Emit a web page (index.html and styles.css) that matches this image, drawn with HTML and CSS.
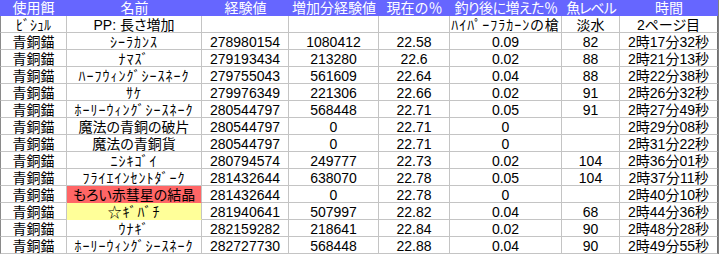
FILE: index.html
```html
<!DOCTYPE html>
<html lang="ja">
<head>
<meta charset="utf-8">
<title>釣りログ</title>
<link rel="stylesheet" href="styles.css">
</head>
<body>
<table class="sheet">
  <colgroup>
    <col class="c-bait">
    <col class="c-name">
    <col class="c-exp">
    <col class="c-gain">
    <col class="c-pct">
    <col class="c-after">
    <col class="c-lvl">
    <col class="c-time">
  </colgroup>
  <thead>
    <tr class="head">
      <th>使用餌</th><th>名前</th><th>経験値</th><th>増加分経験値</th><th class="wide">現在の％</th><th class="tight">釣り後に増えた％</th><th class="tight2">魚レベル</th><th>時間</th>
    </tr>
  </thead>
  <tbody>
    <tr><td>ﾋﾞｼｭﾙ</td><td>PP: 長さ増加</td><td></td><td></td><td></td><td class="hk">ﾊｲﾊﾟｰﾌﾗｶｰﾝの槍</td><td>淡水</td><td>2ページ目</td></tr>
    <tr><td>青銅錨</td><td class="hk">ｼｰﾗｶﾝｽ</td><td>278980154</td><td>1080412</td><td>22.58</td><td>0.09</td><td>82</td><td>2時17分32秒</td></tr>
    <tr><td>青銅錨</td><td class="hk">ﾅﾏｽﾞ</td><td>279193434</td><td>213280</td><td>22.6</td><td>0.02</td><td>88</td><td>2時21分13秒</td></tr>
    <tr><td>青銅錨</td><td class="hk">ﾊｰﾌｳｨﾝｸﾞｼｰｽﾈｰｸ</td><td>279755043</td><td>561609</td><td>22.64</td><td>0.04</td><td>88</td><td>2時22分38秒</td></tr>
    <tr><td>青銅錨</td><td class="hk">ｻｹ</td><td>279976349</td><td>221306</td><td>22.66</td><td>0.02</td><td>91</td><td>2時26分32秒</td></tr>
    <tr><td>青銅錨</td><td class="hk">ﾎｰﾘｰｳｨﾝｸﾞｼｰｽﾈｰｸ</td><td>280544797</td><td>568448</td><td>22.71</td><td>0.05</td><td>91</td><td>2時27分49秒</td></tr>
    <tr><td>青銅錨</td><td>魔法の青銅の破片</td><td>280544797</td><td>0</td><td>22.71</td><td class="zero">0</td><td></td><td>2時29分08秒</td></tr>
    <tr><td>青銅錨</td><td>魔法の青銅貨</td><td>280544797</td><td>0</td><td>22.71</td><td class="zero">0</td><td></td><td>2時31分22秒</td></tr>
    <tr><td>青銅錨</td><td class="hk">ﾆｼｷｺﾞｲ</td><td>280794574</td><td>249777</td><td>22.73</td><td>0.02</td><td>104</td><td>2時36分01秒</td></tr>
    <tr><td>青銅錨</td><td class="hk">ﾌﾗｲｴｲﾝｾﾝﾄﾀﾞｰｸ</td><td>281432644</td><td>638070</td><td>22.78</td><td>0.05</td><td>104</td><td>2時37分11秒</td></tr>
    <tr><td>青銅錨</td><td class="red">もろい赤彗星の結晶</td><td>281432644</td><td>0</td><td>22.78</td><td class="zero">0</td><td></td><td>2時40分10秒</td></tr>
    <tr><td>青銅錨</td><td class="hk yellow">☆ｷﾞﾊﾞﾁ</td><td>281940641</td><td>507997</td><td>22.82</td><td>0.04</td><td>68</td><td>2時44分36秒</td></tr>
    <tr><td>青銅錨</td><td class="hk">ｳﾅｷﾞ</td><td>282159282</td><td>218641</td><td>22.84</td><td>0.02</td><td>90</td><td>2時48分28秒</td></tr>
    <tr><td>青銅錨</td><td class="hk">ﾎｰﾘｰｳｨﾝｸﾞｼｰｽﾈｰｸ</td><td>282727730</td><td>568448</td><td>22.88</td><td>0.04</td><td>90</td><td>2時49分55秒</td></tr>
  </tbody>
</table>
</body>
</html>
```

FILE: styles.css
```css
html, body {
  margin: 0;
  padding: 0;
  background: #ffffff;
}

.sheet {
  table-layout: fixed;
  border-collapse: separate;
  border-spacing: 0;
  width: 719px;
  font-family: "Liberation Sans", "Noto Sans CJK JP", sans-serif;
  font-size: 14px;
  font-feature-settings: "palt";
  color: #000000;
  border-right: 1px solid #808080;
}

.c-bait { width: 67px; }
.c-name { width: 135px; }
.c-exp { width: 87px; }
.c-gain { width: 90px; }
.c-pct { width: 71px; }
.c-after { width: 112px; }
.c-lvl { width: 58px; }
.c-time { width: 98px; }

.sheet th,
.sheet td {
  padding: 0;
  line-height: 12px;
  text-align: center;
  white-space: nowrap;
  overflow: hidden;
  font-weight: normal;
  box-sizing: border-box;
}

.head th {
  background: #6666ff;
  color: #ffffff;
  height: 16px;
  padding-top: 2px;
  vertical-align: top;
}

.head .wide { font-feature-settings: normal; }
.head .tight { letter-spacing: -0.5px; overflow: visible; }
.head .tight2 { letter-spacing: -1px; }

.sheet td {
  height: 17px;
  padding-top: 3px;
  vertical-align: top;
  border-right: 1px solid #c4c4c4;
  border-bottom: 1px solid #c4c4c4;
}

.sheet td:first-child {
  border-left: 1px solid #8a8a8a;
}

.sheet td:last-child {
  border-right: 1px solid #707070;
}

.hk { letter-spacing: 1px; }

.sheet td.hk { overflow: visible; }

.zero { padding-right: 6px; }

.sheet td.red {
  background: #ff6666;
  border-bottom-color: #ff6666;
}

.sheet td.yellow {
  background: #ffff99;
  border-bottom-color: #ffff99;
}
```
